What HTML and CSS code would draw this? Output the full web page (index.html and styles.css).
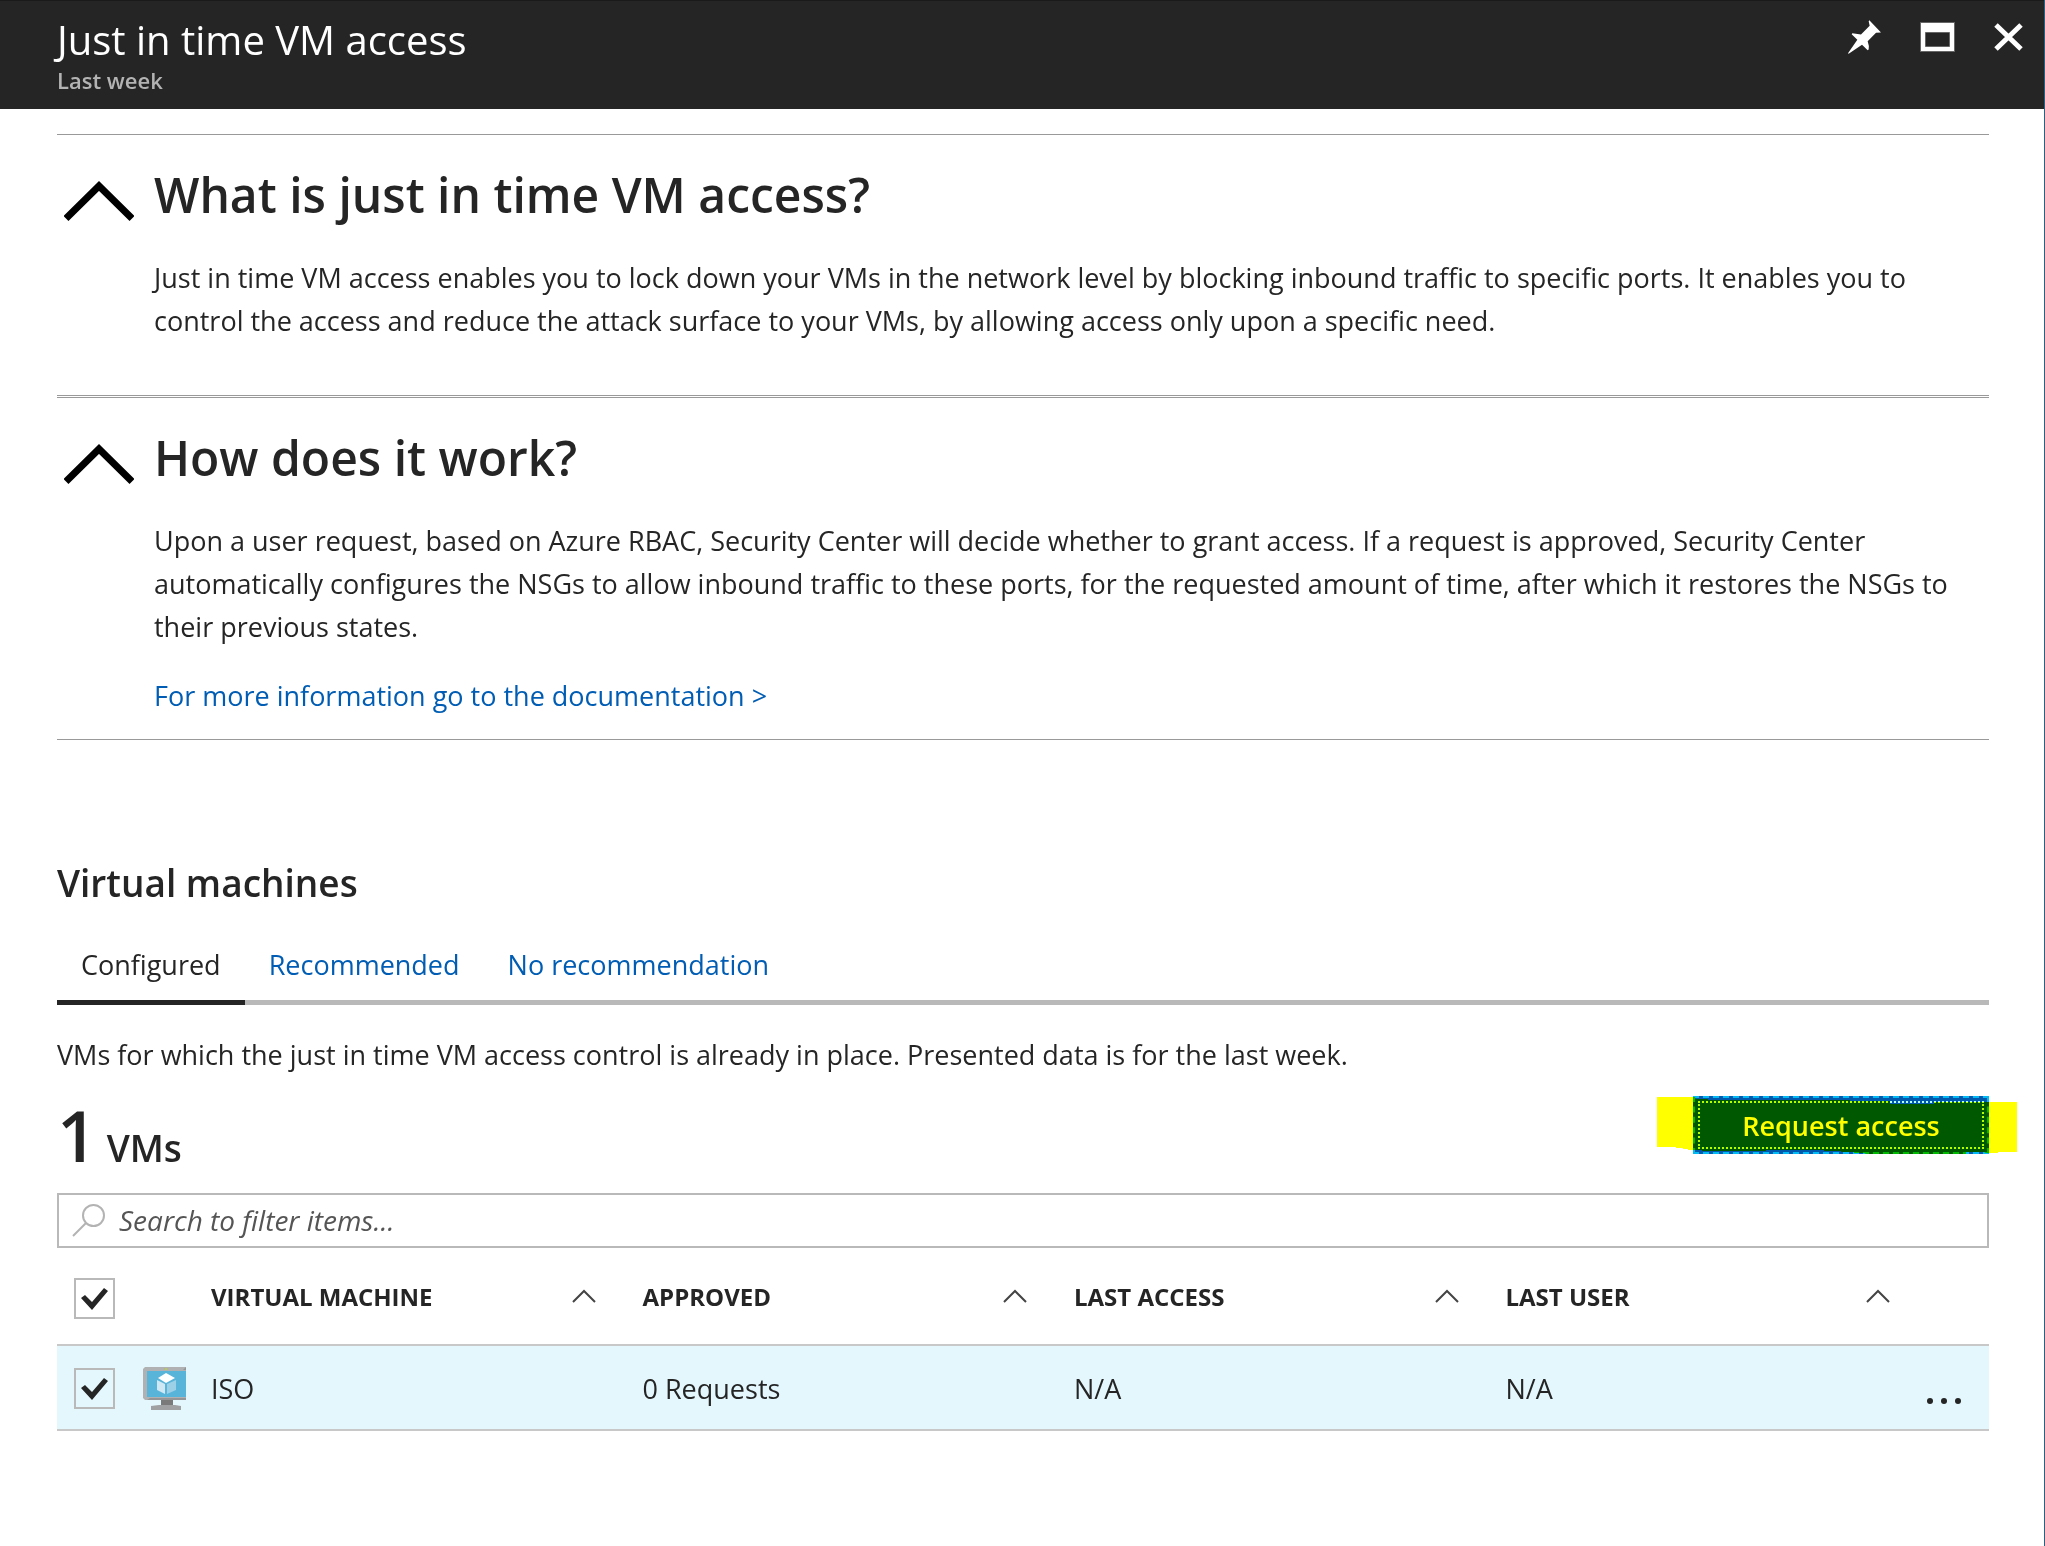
FILE: index.html
```html
<!DOCTYPE html>
<html lang="en">
<head>
    <meta charset="UTF-8">
    <meta name="viewport" content="width=device-width, initial-scale=1.0">
    <title>Just in time VM access</title>
    <link rel="stylesheet" href="styles.css">
</head>
<body>
<header class="blade-header">
    <div class="blade-title">
        <h1>Just in time VM access</h1>
        <p>Last week</p>
    </div>
    <div class="blade-actions">
        <button type="button" aria-label="Pin">
            <svg width="33" height="34" viewBox="144 60 99 101"><path fill="#fff" d="M208 60L243 97L228 98L203 123Q208 136 206 148L203 150L186 134L146 161L144 159L172 119L155 102L157 99L183 103L209 77L206 63Z"/></svg>
        </button>
        <button type="button" aria-label="Maximize">
            <svg width="35" height="30" viewBox="0 0 35 30"><path fill="#fff" stroke="#666" fill-rule="evenodd" d="M.5 .5H34.5V29.5H.5ZM5.500 10.500V24.500H29.500V10.500Z"/></svg>
        </button>
        <button type="button" aria-label="Close">
            <svg width="29" height="28" viewBox="0 0 29 28"><path stroke="#fff" stroke-width="5" d="M2 2L27 26M27 2L2 26"/></svg>
        </button>
    </div>
</header>

<main>
    <!-- Info sections -->
    <section class="info">
        <button type="button" class="toggle" aria-label="Collapse">
            <svg width="70" height="40" viewBox="0 0 70 40"><path fill="none" stroke="#000" stroke-width="7" d="M2 37.500L35 5L68 37.500"/></svg>
        </button>
        <div class="info-body">
            <h2>What is just in time VM access?</h2>
            <p>Just in time VM access enables you to lock down your VMs in the network level by blocking inbound traffic to specific ports. It enables you to control the access and reduce the attack surface to your VMs, by allowing access only upon a specific need.</p>
        </div>
    </section>
    <section class="info">
        <button type="button" class="toggle" aria-label="Collapse">
            <svg width="70" height="40" viewBox="0 0 70 40"><path fill="none" stroke="#000" stroke-width="7" d="M2 37.500L35 5L68 37.500"/></svg>
        </button>
        <div class="info-body">
            <h2>How does it work?</h2>
            <p>Upon a user request, based on Azure RBAC, Security Center will decide whether to grant access. If a request is approved, Security Center automatically configures the NSGs to allow inbound traffic to these ports, for the requested amount of time, after which it restores the NSGs to their previous states.</p>
            <a href="#">For more information go to the documentation &gt;</a>
        </div>
    </section>

    <!-- Virtual machines -->
    <section class="machines">
        <h3>Virtual machines</h3>
        <nav class="tabs">
            <a href="#" class="active">Configured</a>
            <a href="#">Recommended</a>
            <a href="#">No recommendation</a>
        </nav>
        <p class="description">VMs for which the just in time VM access control is already in place. Presented data is for the last week.</p>

        <div class="toolbar">
            <div class="count"><strong>1</strong> VMs</div>
            <div class="request">
                <button type="button" class="request-button">Request access</button>
                <svg class="marker" width="360" height="58" viewBox="0 0 360 58"><path fill="#ff0" d="M0 1H38V3H51V4H193V5H233V8H277V6H360V56H341V57H328V56H309V58H208V57H197V56H184V55H167V54H109V55H45V54H31V53H26V52H19V51H0Z"/></svg>
            </div>
        </div>

        <div class="search">
            <svg width="33" height="33" viewBox="0 0 33 33"><g fill="none" stroke="#b3b3b3" stroke-width="2"><circle cx="21.500" cy="11.500" r="10.500"/><path d="M14 19L1 32"/></g></svg>
            <input type="text" placeholder="Search to filter items..." aria-label="Search to filter items">
        </div>

        <table>
            <colgroup>
                <col class="col-check">
                <col class="col-icon">
                <col>
                <col>
                <col>
                <col>
                <col class="col-menu">
            </colgroup>
            <thead>
                <tr>
                    <th><input type="checkbox" aria-label="Select all" checked></th>
                    <th></th>
                    <th><div class="sort">VIRTUAL MACHINE <svg width="24" height="14" viewBox="0 0 24 14"><path d="M1 13L12 2L23 13"/></svg></div></th>
                    <th><div class="sort">APPROVED <svg width="24" height="14" viewBox="0 0 24 14"><path d="M1 13L12 2L23 13"/></svg></div></th>
                    <th><div class="sort">LAST ACCESS <svg width="24" height="14" viewBox="0 0 24 14"><path d="M1 13L12 2L23 13"/></svg></div></th>
                    <th><div class="sort">LAST USER <svg width="24" height="14" viewBox="0 0 24 14"><path d="M1 13L12 2L23 13"/></svg></div></th>
                    <th></th>
                </tr>
            </thead>
            <tbody>
                <tr>
                    <td><input type="checkbox" aria-label="Select ISO" checked></td>
                    <td>
                        <svg class="vm-icon" width="43" height="43" viewBox="0 0 43 43">
                            <path fill="#7a7a7a" d="M18 33H30V38H18Z"/>
                            <path fill="#a0a1a2" d="M8 39L16 38H32L38 39V43H8Z"/>
                            <path fill="#b0b1b2" d="M2 0H43V33H2L0 31V2Z"/>
                            <path fill="#59b4d9" d="M4 4H43V30H4Z"/>
                            <path fill="#949596" d="M40 3L43 0V3ZM4 33L7 31H43V33Z"/>
                            <circle cx="23" cy="2" r="1" fill="#b8d432"/>
                            <path fill="#fff" d="M23 6L32 11L23 16L15 11Z"/>
                            <path fill="#cfe8f3" d="M14 13L22 17V27L14 23Z"/>
                            <path fill="#9bd0e7" d="M33 13L24 17V27L33 23Z"/>
                        </svg>
                    </td>
                    <td>ISO</td>
                    <td>0 Requests</td>
                    <td>N/A</td>
                    <td>N/A</td>
                    <td>
                        <button type="button" class="menu" aria-label="More">
                            <svg width="34" height="6" viewBox="0 0 34 6"><g fill="#252525"><circle cx="3" cy="3" r="3"/><circle cx="17" cy="3" r="3"/><circle cx="31" cy="3" r="3"/></g></svg>
                        </button>
                    </td>
                </tr>
            </tbody>
        </table>
    </section>
</main>
</body>
</html>
```
FILE: styles.css
```css
* {
    box-sizing: border-box;
}
body {
    margin: 0;
    min-height: 100vh;
    border-right: 1px solid #2f5f80;
    font-family: "Open Sans", "Noto Sans", sans-serif;
    font-size: 27px;
    line-height: 43px;
    color: #252525;
    background-color: #fff;
}
h1, h2, h3, p {
    margin: 0;
}
a {
    color: #005db3;
    text-decoration: none;
}
button {
    padding: 0;
    border: none;
    background: none;
    font-family: inherit;
    cursor: pointer;
}
svg {
    display: block;
}

/* Header */
.blade-header {
    display: flex;
    justify-content: space-between;
    height: 109px;
    padding: 14px 21px 0 57px;
    border-top: 1px solid #1a1a1a;
    background-color: #252525;
}
.blade-title h1 {
    font-size: 40px;
    font-weight: 400;
    line-height: 50px;
    color: #fff;
}
.blade-title p {
    font-size: 22px;
    font-weight: 600;
    line-height: 30px;
    color: #b3b3b3;
}
.blade-actions {
    display: flex;
    align-items: center;
    gap: 39px;
    height: 44px;
}

main {
    padding: 25px 55px 0 57px;
}

/* Info sections */
.info {
    display: flex;
    padding: 30px 0 22px;
    border-top: 1px solid #999;
}
.info + .info {
    margin-top: 5px;
    border-top: 3px double #999;
    border-bottom: 1px solid #999;
}
.toggle {
    align-self: flex-start;
    flex: none;
    margin: 16px 20px 0 7px;
}
.info h2 {
    margin-bottom: 31px;
    font-size: 48px;
    font-weight: 600;
    line-height: 60px;
}
.info p {
    margin-bottom: 26px;
}
.info a {
    display: block;
}

/* Virtual machines */
.machines h3 {
    margin-top: 118px;
    font-size: 37px;
    font-weight: 600;
    line-height: 50px;
}
.tabs {
    display: flex;
    margin-top: 35px;
    box-shadow: inset 0 -5px #b9b9b9;
}
.tabs a {
    padding: 0 24px 14px;
    border-bottom: 5px solid transparent;
}
.tabs .active {
    border-color: #252525;
    color: #252525;
}
.description {
    margin-top: 28px;
}
.toolbar {
    display: flex;
    justify-content: space-between;
    height: 78px;
    margin: 20px 0 19px;
}
.count {
    font-size: 37px;
    font-weight: 600;
    line-height: 78px;
}
.count strong {
    font-size: 70px;
    font-weight: 600;
}
.request {
    position: relative;
    height: 58px;
}
.request-button {
    width: 296px;
    height: 58px;
    border: 2px dashed #00bcf2;
    outline: 2px dotted #b3ffff;
    outline-offset: -7px;
    background-color: #0058ad;
    font-size: 27px;
    font-weight: 600;
    color: #fff;
}
/* highlighter stroke over the button */
.marker {
    position: absolute;
    top: 0;
    left: -36px;
    mix-blend-mode: multiply;
    pointer-events: none;
}
.search {
    display: flex;
    align-items: center;
    height: 55px;
    padding: 0 13px;
    border: 2px solid #b9b9b9;
}
.search input {
    flex: 1;
    padding: 0 0 2px 14px;
    border: none;
    outline: none;
    font-family: inherit;
    font-size: 28px;
    font-style: italic;
}
.search input::placeholder {
    color: #555;
}

/* Table */
table {
    width: 100%;
    table-layout: fixed;
    border-collapse: collapse;
}
.col-check {
    width: 86px;
}
.col-icon {
    width: 68px;
}
.col-menu {
    width: 52px;
}
th, td {
    padding: 0;
    text-align: left;
}
th {
    height: 97px;
    font-size: 24px;
    font-weight: 700;
}
td {
    height: 85px;
    padding-top: 2px;
    border-top: 2px solid #c8c8c8;
    border-bottom: 2px solid #c8c8c8;
    background-color: #e3f7fd;
}
.sort {
    display: flex;
    align-items: center;
    justify-content: space-between;
    padding-right: 47px;
}
.sort path {
    fill: none;
    stroke: #444;
    stroke-width: 2;
}
input[type="checkbox"] {
    appearance: none;
    display: block;
    width: 41px;
    height: 41px;
    margin: 0 0 0 17px;
    border: 2px solid #b9b9b9;
}
th input[type="checkbox"] {
    margin-top: 5px;
}
input[type="checkbox"]:checked::before {
    content: "";
    display: block;
    width: 27px;
    height: 22px;
    margin: 8px 0 0 5px;
    background-color: #252525;
    clip-path: polygon(0 10px, 4px 7px, 11px 14px, 23px 0, 27px 3px, 11px 22px);
}
.menu {
    float: right;
    margin: 25px 28px 0 0;
}
```
